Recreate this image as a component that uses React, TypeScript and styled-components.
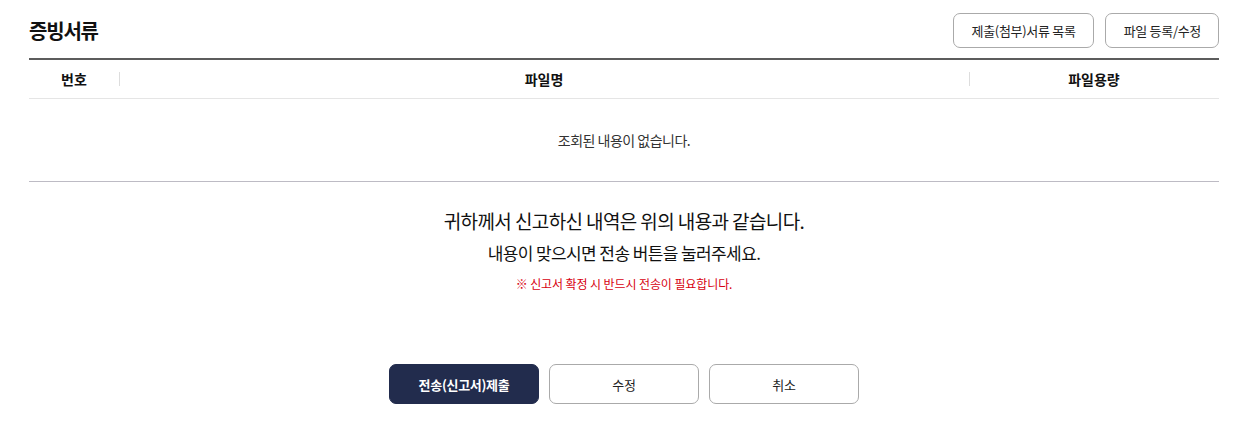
import styled, { createGlobalStyle } from "styled-components";

const GlobalStyle = createGlobalStyle`
  html, body {
    margin: 0;
    padding: 0;
    background: #fff;
    font-family: "Noto Sans CJK KR", "Noto Sans", sans-serif;
    color: #111;
  }
  * { box-sizing: border-box; }
`;

const columns = [
  { label: "번호", width: "90px" },
  { label: "파일명", width: "auto" },
  { label: "파일용량", width: "250px" },
];

const App = () => {
  return (
    <>
      <GlobalStyle />
      <Page>
        <TitleBar>
          <Title>증빙서류</Title>
          <TopButtons>
            <SmallButton>제출(첨부)서류 목록</SmallButton>
            <SmallButton>파일 등록/수정</SmallButton>
          </TopButtons>
        </TitleBar>
        <Table>
          <HeadRow>
            {columns.map((c, i) => (
              <HeadCell key={c.label} $first={i === 0} $w={c.width}>
                {c.label}
              </HeadCell>
            ))}
          </HeadRow>
          <EmptyRow>조회된 내용이 없습니다.</EmptyRow>
        </Table>
        <Message>
          <Line1>귀하께서 신고하신 내역은 위의 내용과 같습니다.</Line1>
          <Line2>내용이 맞으시면 전송 버튼을 눌러주세요.</Line2>
          <Notice>※ 신고서 확정 시 반드시 전송이 필요합니다.</Notice>
        </Message>
        <Actions>
          <ActionButton $primary>전송(신고서)제출</ActionButton>
          <ActionButton>수정</ActionButton>
          <ActionButton>취소</ActionButton>
        </Actions>
      </Page>
    </>
  );
};

const Page = styled.div`
  padding: 13px 16px 0 29px;
  width: 1235px;
`;
const TitleBar = styled.div`
  display: flex;
  justify-content: space-between;
  align-items: center;
  height: 35px;
  margin-bottom: 10px;
`;
const Title = styled.h2`
  margin: 0;
  font-size: 20px;
  font-weight: 700;
  letter-spacing: -1.2px;
  color: #111;
`;
const TopButtons = styled.div`
  display: flex;
  gap: 11px;
`;
const SmallButton = styled.button`
  height: 35px;
  padding: 0 17px 0 18px;
  border: 1px solid #aaa;
  border-radius: 7px;
  background: #fff;
  font-family: inherit;
  font-size: 13px;
  color: #222;
  letter-spacing: -0.3px;
  cursor: pointer;
`;
const Table = styled.div`
  border-top: 2px solid #5c5c5c;
  border-bottom: 1px solid #bdbbc4;
`;
const HeadRow = styled.div`
  display: flex;
  height: 39px;
  align-items: center;
  border-bottom: 1px solid #e5e5e5;
`;
const HeadCell = styled.div<{ $first?: boolean; $w: string }>`
  flex: ${(p) => (p.$w === "auto" ? "1" : `0 0 ${p.$w}`)};
  text-align: center;
  font-size: 14px;
  font-weight: 700;
  color: #111;
  position: relative;
  ${(p) =>
    !p.$first &&
    `
    &::before {
      content: "";
      position: absolute;
      left: 0;
      top: 50%;
      margin-top: -7px;
      height: 14px;
      width: 1px;
      background: #ddd;
    }
  `}
`;
const EmptyRow = styled.div`
  height: 82px;
  display: flex;
  align-items: center;
  justify-content: center;
  font-size: 14px;
  color: #333;
  letter-spacing: -0.5px;
`;
const Message = styled.div`
  display: flex;
  flex-direction: column;
  align-items: center;
  padding-top: 24px;
`;
const Line1 = styled.p`
  margin: 0;
  font-size: 19px;
  line-height: 30px;
  letter-spacing: -0.6px;
  color: #111;
`;
const Line2 = styled.p`
  margin: 3px 0 0;
  font-size: 17px;
  line-height: 28px;
  letter-spacing: -0.6px;
  color: #111;
`;
const Notice = styled.p`
  margin: 7px 0 0;
  font-size: 12px;
  line-height: 20px;
  letter-spacing: -0.1px;
  color: #d7000f;
`;
const Actions = styled.div`
  display: flex;
  justify-content: center;
  gap: 10px;
  margin-top: 70px;
`;
const ActionButton = styled.button<{ $primary?: boolean }>`
  width: 150px;
  height: 40px;
  border-radius: 7px;
  font-family: inherit;
  font-size: 13px;
  letter-spacing: -0.3px;
  cursor: pointer;
  border: 1px solid ${(p) => (p.$primary ? "#222c4d" : "#aaa")};
  background: ${(p) => (p.$primary ? "#222c4d" : "#fff")};
  color: ${(p) => (p.$primary ? "#fff" : "#222")};
  font-weight: ${(p) => (p.$primary ? 700 : 400)};
`;

export default App;
